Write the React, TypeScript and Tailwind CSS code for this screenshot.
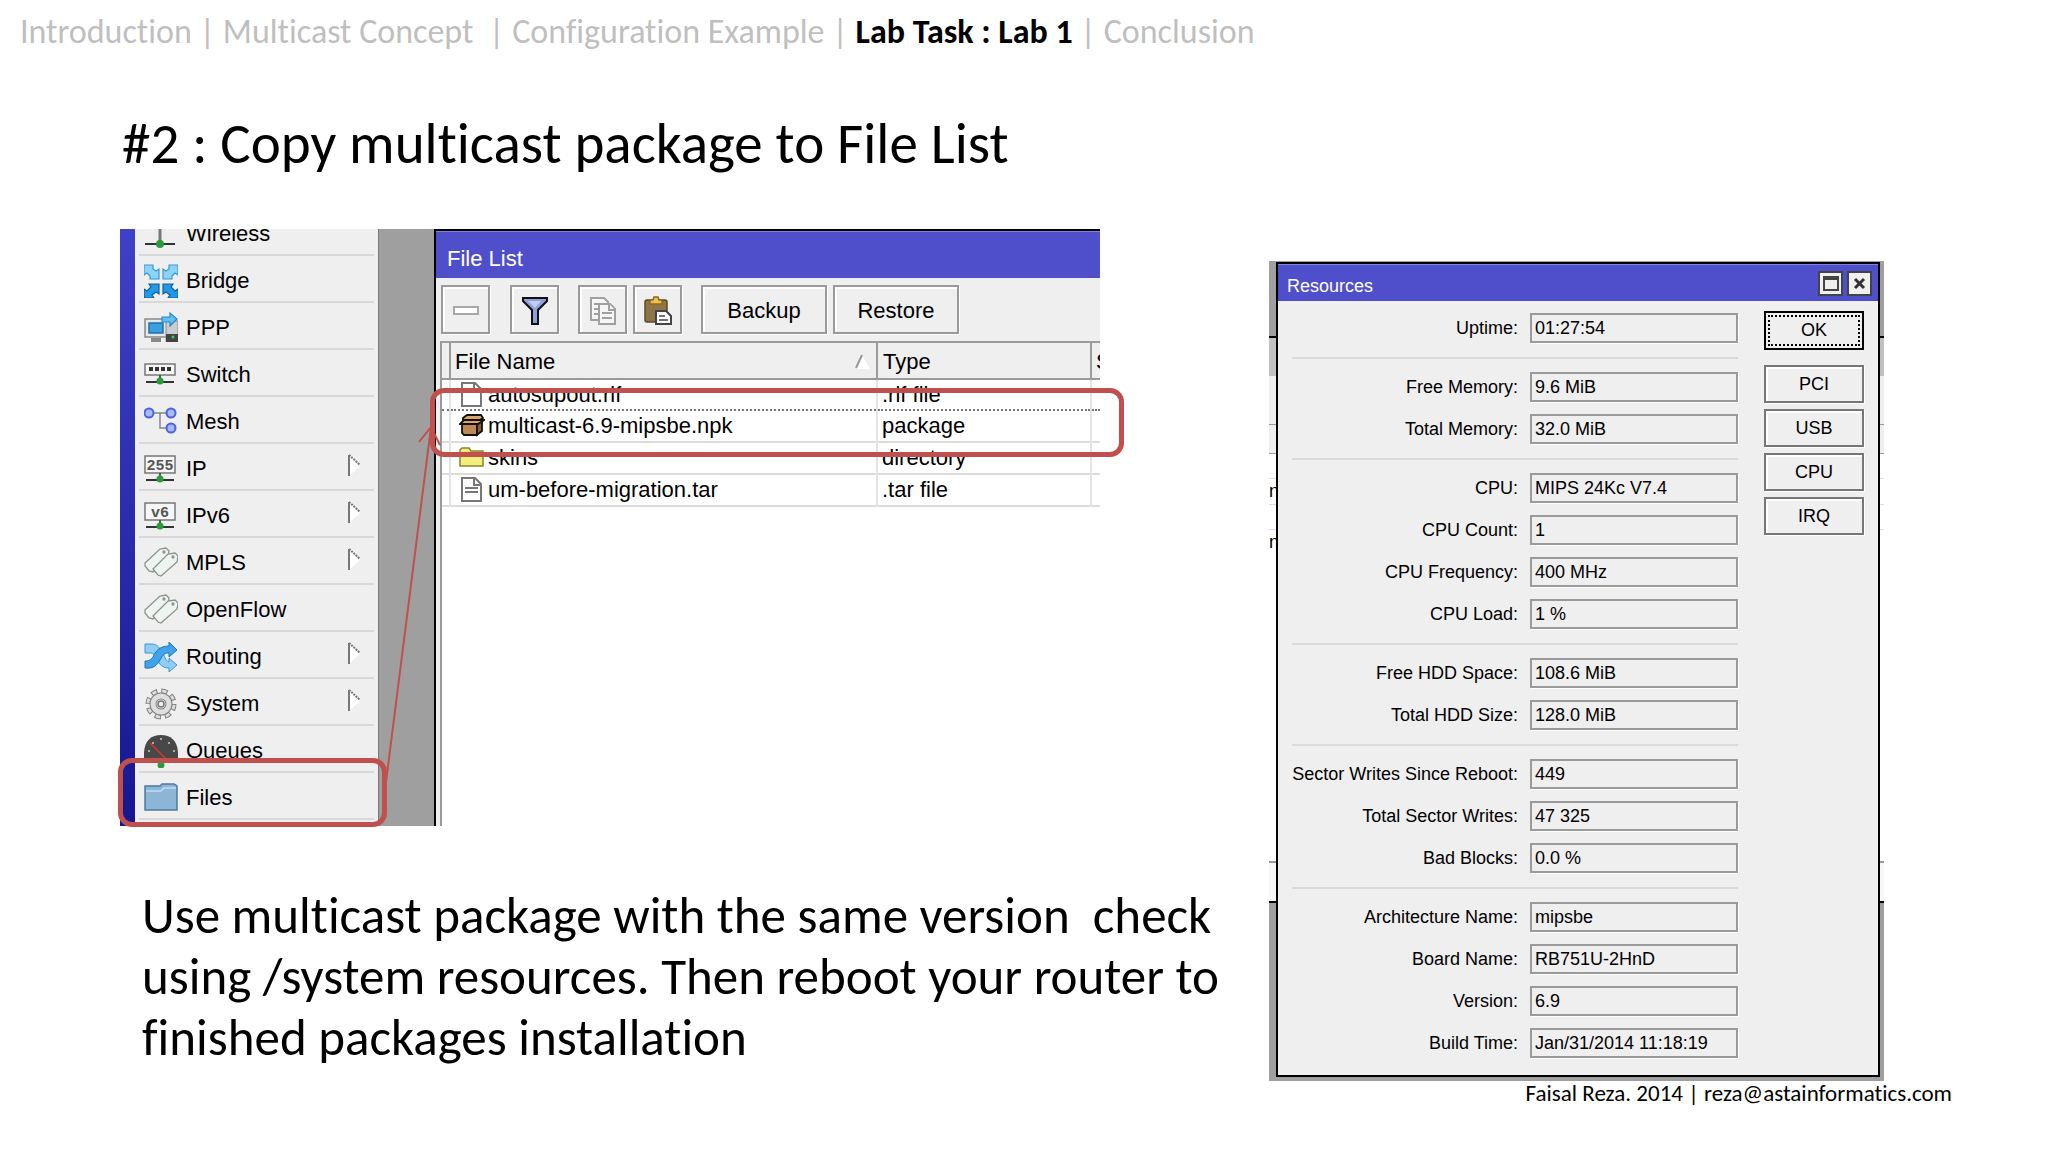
import type { ReactNode } from "react";

const icons: Record<string, ReactNode> = {
  wireless: (
    <>
      <path d="M16 6v21" stroke="#777" strokeWidth="3" />
      <path d="M1 27h30" stroke="#333" strokeWidth="2" />
      <circle cx="16" cy="27" r="4" fill="#2a9a3a" />
    </>
  ),
  bridge: (
    <>
      <g fill="#8ad4fa" stroke="#3d97d6" strokeWidth="1.2">
        <path d="M0 1h9v4l3 2 3-2v10H6V12l-3-3-3 2z" />
        <path d="M34 1h-9v4l-3 2-3-2v10h9v-3l3-3 3 2z" />
      </g>
      <g fill="#2298e6" stroke="#0f5fa0" strokeWidth="1.2">
        <path d="M15 20H5l2 3-4 4-3-2v9h10l-2-3 4-3 3 2z" />
        <path d="M19 20h10l-2 3 4 4 3-2v9H24l2-3-4-3-3 2z" />
      </g>
    </>
  ),
  ppp: (
    <>
      <rect x="1" y="8" width="22" height="18" fill="#e8e8e8" stroke="#888" strokeWidth="1.5" />
      <rect x="5" y="12" width="14" height="10" fill="#3d9fe0" stroke="#1e6fae" strokeWidth="1.5" />
      <rect x="7" y="27" width="10" height="4" fill="#888" />
      <rect x="22" y="10" width="12" height="20" fill="#ccc" stroke="#888" />
      <rect x="22" y="23" width="12" height="8" fill="#444" />
      <circle cx="29" cy="26" r="1.5" fill="#3bd14a" />
      <path d="M18 6h8V2l7 6-7 7v-4h-8z" fill="#5fc0f5" stroke="#2b86c8" strokeWidth="1.2" />
    </>
  ),
  switch: (
    <>
      <rect x="1" y="6" width="30" height="11" fill="#f4f4f4" stroke="#777" strokeWidth="1.5" />
      <path d="M5 11h22" stroke="#333" strokeWidth="4" strokeDasharray="4 2" />
      <path d="M16 17v6" stroke="#555" strokeWidth="2" />
      <path d="M2 24h28" stroke="#333" strokeWidth="2" />
      <circle cx="16" cy="23" r="3.5" fill="#2a9a3a" />
    </>
  ),
  mesh: (
    <>
      <path d="M8 8h14M16 8v15h8" fill="none" stroke="#888" strokeWidth="1.5" />
      <g fill="#a9b8f5" stroke="#4a63dc" strokeWidth="2">
        <circle cx="5" cy="8" r="4.5" />
        <circle cx="27" cy="8" r="4.5" />
        <circle cx="27" cy="23" r="4.5" />
      </g>
    </>
  ),
  routing: (
    <>
      <path
        d="M1 4h7c5 0 8 4 11 9 2 5 4 9 6 9v-4l8 7-8 7v-4c-7 0-10-4-12-9-2-4-4-6-6-6H1z"
        fill="#8fcdf7"
        stroke="#3d97d6"
      />
      <path
        d="M1 28c9 1 12-3 15-8 3-6 5-7 9-7v4l8-7-8-8v4c-7 0-12 3-15 9-2 4-4 6-9 6z"
        fill="#3fa4ea"
        stroke="#1f74b8"
      />
    </>
  ),
  system: (
    <>
      <circle cx="17" cy="17" r="13" fill="none" stroke="#808080" strokeWidth="5" strokeDasharray="6.2 4" />
      <circle cx="17" cy="17" r="13" fill="none" stroke="#dedede" strokeWidth="3" strokeDasharray="4.2 6" strokeDashoffset="-1" />
      <circle cx="17" cy="17" r="8" fill="none" stroke="#808080" strokeWidth="7" />
      <circle cx="17" cy="17" r="8" fill="none" stroke="#dedede" strokeWidth="5" />
      <circle cx="17" cy="17" r="3" fill="#eee" stroke="#777" strokeWidth="1.5" />
    </>
  ),
  queues: (
    <>
      <path d="M0 24C-1 8 6 1 17 1s18 7 17 23z" fill="#484848" />
      <path d="M4 17h2M8 9h2M16 5h2M24 9h2M29 17h2" stroke="#ccc" strokeWidth="1.5" />
      <path d="M6 9l16 16" stroke="#d33" strokeWidth="1.5" />
      <circle cx="17" cy="31" r="3.5" fill="#2a9a3a" />
    </>
  ),
  files: (
    <>
      <path d="M1 5h15l2-2h12l3 2v24H1z" fill="#8db5d5" stroke="#4c7ba2" strokeWidth="1.5" />
      <path d="M2 10h15l3-3h12" fill="none" stroke="#c5dcee" strokeWidth="1.5" />
    </>
  ),
};

function Tags() {
  return (
    <g fill="#eef5f0" stroke="#8b938d" strokeWidth="1.3">
      <path d="M1 17L16 3l6-1 3 3-1 6L9 26l-4-1-4-5z" />
      <path d="M9 23L24 8l7-1 3 3-1 6-16 14-3-1z" />
      <circle cx="20" cy="6" r="1" />
      <circle cx="29" cy="11" r="1" />
    </g>
  );
}

function Plate({ text }: { text: string }) {
  return (
    <>
      <rect x="1" y="4" width="30" height="17" fill="#f6f6f6" stroke="#777" strokeWidth="1.5" />
      <text x="16" y="18" textAnchor="middle" fontSize="15" fontWeight="700" fontFamily="Liberation Mono, monospace" fill="#555">
        {text}
      </text>
      <path d="M16 21v5" stroke="#555" strokeWidth="2" />
      <path d="M2 28h28" stroke="#333" strokeWidth="2" />
      <circle cx="16" cy="27" r="3.5" fill="#2a9a3a" />
    </>
  );
}

const menu = [
  { label: "Wireless", icon: icons.wireless },
  { label: "Bridge", icon: icons.bridge },
  { label: "PPP", icon: icons.ppp },
  { label: "Switch", icon: icons.switch },
  { label: "Mesh", icon: icons.mesh },
  { label: "IP", icon: <Plate text="255" />, sub: true },
  { label: "IPv6", icon: <Plate text="v6" />, sub: true },
  { label: "MPLS", icon: <Tags />, sub: true },
  { label: "OpenFlow", icon: <Tags /> },
  { label: "Routing", icon: icons.routing, sub: true },
  { label: "System", icon: icons.system, sub: true },
  { label: "Queues", icon: icons.queues },
  { label: "Files", icon: icons.files },
];

const page = <path d="M3 1h13l6 6v17H3zM15 1v7h7" fill="#fff" stroke="#777" strokeWidth="2" />;

const files = [
  { name: "autosupout.rif", type: ".rif file", icon: page },
  {
    name: "multicast-6.9-mipsbe.npk",
    type: "package",
    icon: (
      <g fill="#c08850" stroke="#111" strokeWidth="1.8">
        <path d="M3 11h15v11H5l-2-2z" />
        <path d="M18 11l5-4v11l-5 4z" fill="#8a5c30" />
        <path d="M4 5l4-3h14l2 3-5 3H4z" fill="#d9a56c" />
        <path d="M1 11l4-4h20l-6 4z" fill="#d9a56c" />
      </g>
    ),
  },
  {
    name: "skins",
    type: "directory",
    icon: <path d="M1 21V5l2-2h7l2 3h12v15zM1 8h22" fill="#f2ee7c" stroke="#8a8430" strokeWidth="1.5" />,
  },
  {
    name: "um-before-migration.tar",
    type: ".tar file",
    icon: (
      <>
        {page}
        <path d="M6 11h13M6 15h13" stroke="#777" strokeWidth="2" />
      </>
    ),
  },
];

const groups = [
  [["Uptime", "01:27:54"]],
  [
    ["Free Memory", "9.6 MiB"],
    ["Total Memory", "32.0 MiB"],
  ],
  [
    ["CPU", "MIPS 24Kc V7.4"],
    ["CPU Count", "1"],
    ["CPU Frequency", "400 MHz"],
    ["CPU Load", "1 %"],
  ],
  [
    ["Free HDD Space", "108.6 MiB"],
    ["Total HDD Size", "128.0 MiB"],
  ],
  [
    ["Sector Writes Since Reboot", "449"],
    ["Total Sector Writes", "47 325"],
    ["Bad Blocks", "0.0 %"],
  ],
  [
    ["Architecture Name", "mipsbe"],
    ["Board Name", "RB751U-2HnD"],
    ["Version", "6.9"],
    ["Build Time", "Jan/31/2014 11:18:19"],
  ],
];

const toolButton =
  "flex h-[49px] items-center justify-center border-2 border-[#9a9a9a] bg-[#f0eff0] pt-[2px] shadow-[inset_2px_2px_0_#fff,1px_1px_0_#fff]";

function Sidebar() {
  return (
    <div className="flex w-[259px] shrink-0 border-r border-[#777] bg-[#f0eff0]">
      <div className="w-[15px] bg-linear-to-b from-[#4040c8] to-[#161690]" />
      <ul className="-mt-5 ml-1 w-[235px]">
        {menu.map((item) => (
          <li key={item.label} className="h-[47px] border-b-2 border-[#d8d8d8]">
            <button className="flex h-full w-full items-center pt-1 pl-[5px] text-left">
              <svg width="34" height="34" viewBox="0 0 34 34" className="mr-2 shrink-0">
                {item.icon}
              </svg>
              <span className="flex-1">{item.label}</span>
              {item.sub && (
                <svg width="14" height="24" viewBox="0 0 14 24" className="mr-3 mb-2">
                  <path d="M1 2l11 11L1 23z" fill="#fff" />
                  <path d="M1 23V2" stroke="#777" strokeWidth="2" />
                  <path d="M1 2l11 10" stroke="#777" strokeWidth="2" strokeDasharray="2 1" />
                </svg>
              )}
            </button>
          </li>
        ))}
      </ul>
    </div>
  );
}

function FileList() {
  return (
    <div className="flex min-w-0 flex-1 flex-col border-t-2 border-l-2 border-black bg-[#f0eff0]">
      <div className="flex h-[47px] items-center border-t border-[#8080e0] bg-[#4f4fcb] pt-2 pl-[11px] text-white">
        File List
      </div>
      <div className="flex h-[63px] items-center pl-[5px]">
        <button aria-label="Remove" className={`${toolButton} mr-5 w-[49px]`}>
          <span className="h-[9px] w-[26px] border-2 border-[#a8a8a8] bg-white" />
        </button>
        <button aria-label="Filter" className={`${toolButton} mr-[19px] w-[49px]`}>
          <svg width="28" height="30" viewBox="0 0 28 30">
            <path d="M2 2h24v3l-9 9v14h-6V14L2 5z" fill="#8fa0dc" stroke="#111" strokeWidth="2" />
            <path d="M7 5h13l-6 7z" fill="#c3cdf2" />
          </svg>
        </button>
        <button aria-label="Copy" className={`${toolButton} mr-[6px] w-[49px]`}>
          <svg width="28" height="30" viewBox="0 0 28 30" fill="#f6f6f6" stroke="#a0a0a0" strokeWidth="2">
            <path d="M2 2h13l4 4v18H2z" />
            <path d="M5 8h6M5 13h6M5 18h6" />
            <path d="M10 8h11l5 5v15H10z" />
            <path d="M13 17h10M13 22h10M20 8v6h6" />
          </svg>
        </button>
        <button aria-label="Paste" className={`${toolButton} mr-[19px] w-[49px]`}>
          <svg width="28" height="30" viewBox="0 0 28 30">
            <rect x="1" y="4" width="22" height="22" rx="2" fill="#8f7446" stroke="#5c4a2a" strokeWidth="1.5" />
            <path d="M6 8V4h3l1-3h4l1 3h3v4z" fill="#f0c050" stroke="#8a6a20" strokeWidth="1.5" />
            <path d="M12 15h10l5 5v8H12z" fill="#fff" stroke="#444" strokeWidth="2" />
            <path d="M15 20h6M15 24h9" stroke="#444" strokeWidth="1.5" />
          </svg>
        </button>
        <button className={`${toolButton} mr-[6px] w-[126px]`}>Backup</button>
        <button className={`${toolButton} w-[126px]`}>Restore</button>
      </div>
      <div className="ml-1 flex-1 border-l-2 border-[#9a9a9a] bg-white">
        <table className="w-full table-fixed border-collapse text-left">
          <thead>
            <tr className="h-[37px] border-y-2 border-[#9a9a9a] bg-[#f0eff0]">
              <th className="w-2 border-r-2 border-[#9a9a9a]" />
              <th className="border-r-2 border-[#9a9a9a] pt-[2px] pl-1 font-normal">
                <div className="flex items-center justify-between">
                  File Name
                  <svg width="18" height="16" viewBox="0 0 18 16" className="mr-1">
                    <path d="M8 1l8 14H2z" fill="#fff" />
                    <path d="M8 1L2 14" stroke="#999" strokeWidth="2" />
                  </svg>
                </div>
              </th>
              <th className="w-[214px] border-r-2 border-[#9a9a9a] pt-[2px] pl-[5px] font-normal">Type</th>
              <th className="w-[9px] overflow-hidden pt-[2px] pl-1 font-normal">S</th>
            </tr>
          </thead>
          <tbody>
            {files.map((file, i) => (
              <tr
                key={file.name}
                className={
                  i === 0
                    ? "h-[31px] border-b-2 border-dotted border-b-[#777]"
                    : "h-8 border-b-2 border-[#dcdcdc]"
                }
              >
                <td className="border-r-2 border-r-[#e4e4e4]" />
                <td className="border-r-2 border-r-[#e4e4e4] pl-2">
                  <div className="flex h-7 items-center gap-[3px]">
                    <svg width="26" height="26" viewBox="0 0 26 26">
                      {file.icon}
                    </svg>
                    {file.name}
                  </div>
                </td>
                <td className="border-r-2 border-r-[#e4e4e4] pl-1 leading-7">{file.type}</td>
                <td />
              </tr>
            ))}
          </tbody>
        </table>
      </div>
    </div>
  );
}

function WinboxFigure() {
  return (
    <div className="relative mr-[169px] font-['Liberation_Sans',Arial,sans-serif] text-[22px] leading-7">
      <div className="flex h-[597px] overflow-hidden bg-[#a09fa0]">
        <Sidebar />
        <div className="w-[55px] shrink-0" />
        <FileList />
      </div>

      {/* Highlights */}
      <svg width="340" height="597" viewBox="0 0 340 597" className="pointer-events-none absolute top-0 left-0">
        <path d="M266 553L311 198M299 213l12-15 9 18" fill="none" stroke="#c0504d" strokeWidth="2" />
      </svg>
      <div className="pointer-events-none absolute top-[159px] -right-6 left-[310px] h-[69px] rounded-[14px] border-5 border-[#c0504d]" />
      <div className="pointer-events-none absolute top-[529px] -left-[2px] h-[69px] w-[269px] rounded-[14px] border-5 border-[#c0504d]" />
    </div>
  );
}

/* The desktop showing behind the dialog's edges */
function Backdrop() {
  return (
    <div className="absolute inset-0 flex flex-col overflow-hidden leading-6">
      <div className="h-[77px] border-b-2 border-black bg-[#a09fa0]" />
      <div className="h-[38px] bg-[#c0c0c0]" />
      <div className="h-[49px] border-b border-[#999] bg-[#f0eff0]" />
      <div className="h-[29px] border-b border-[#999] bg-[#f0eff0]" />
      <div className="h-[25px] border-b border-[#dcdcdc] bg-white" />
      <div className="h-[26px] border-b border-[#dcdcdc] bg-white">n</div>
      <div className="h-[25px] border-b border-[#dcdcdc] bg-white" />
      <div className="h-[26px] bg-white">n</div>
      <div className="h-[307px] border-b-2 border-[#999] bg-white" />
      <div className="h-[40px] border-b-2 border-black bg-[#f8f8f8]" />
      <div className="flex-1 bg-[#a09fa0]" />
    </div>
  );
}

function Resources() {
  const sideButton =
    "h-[38px] w-full border-2 border-[#777] bg-[#f0eff0] shadow-[inset_2px_2px_0_#fff,1px_1px_0_#fff]";

  return (
    <div className="relative mt-8 pt-[1px] pr-1 pb-1 pl-[7px] font-['Liberation_Sans',Arial,sans-serif] text-[18px]">
      <Backdrop />
      <div className="relative border-2 border-black bg-[#f0eff0]">
        <div className="flex h-[37px] items-center border-t border-[#8080e0] bg-[#4f4fcb] pr-[6px] pl-[9px] text-white">
          <h2 className="flex-1 pt-[6px]">Resources</h2>
          <button aria-label="Maximize" className="mr-1 flex size-[25px] items-center justify-center border-2 border-[#444] bg-[#f0eff0]">
            <span className="h-[15px] w-4 border-2 border-t-4 border-[#444]" />
          </button>
          <button aria-label="Close" className="flex size-[25px] items-center justify-center border-2 border-[#444] bg-[#f0eff0]">
            <svg width="13" height="13" viewBox="0 0 13 13">
              <path d="M2 2l9 9M11 2l-9 9" stroke="#333" strokeWidth="3" />
            </svg>
          </button>
        </div>
        <div className="flex gap-[26px] pr-[14px] pl-[14px]">
          <div className="flex-1 pt-3 pb-[17px]">
            {groups.map((rows, i) => (
              <div
                key={i}
                className={i > 0 ? "mt-[14px] flex flex-col gap-3 border-t-2 border-[#dadada] pt-[13px]" : ""}
              >
                {rows.map(([label, value]) => (
                  <label key={label} className="flex items-center gap-3">
                    <span className="flex-1 text-right whitespace-nowrap">{label}:</span>
                    <input
                      readOnly
                      value={value}
                      className="h-[30px] w-[208px] border-2 border-[#9a9a9a] bg-[#f0eff0] pl-[3px] shadow-[1px_1px_0_#fff] outline-none"
                    />
                  </label>
                ))}
              </div>
            ))}
          </div>
          <div className="flex w-[100px] flex-col gap-[6px] pt-[10px]">
            <button className="mb-[9px] h-[39px] w-full border-2 border-black p-[2px]">
              <span className="flex h-full items-center justify-center border-2 border-dotted border-black">OK</span>
            </button>
            <button className={sideButton}>PCI</button>
            <button className={sideButton}>USB</button>
            <button className={sideButton}>CPU</button>
            <button className={sideButton}>IRQ</button>
          </div>
        </div>
      </div>
    </div>
  );
}

export default function App() {
  return (
    <div className="min-h-screen bg-white font-['Carlito','Lato',sans-serif] text-black [font-variant-ligatures:none]">
      <nav className="pt-3 pl-5 text-[34px] leading-10 whitespace-pre text-[#bfbfbf]">
        Introduction | Multicast Concept{"  "}| Configuration Example |{" "}
        <strong className="font-bold text-black">Lab Task : Lab 1</strong> | Conclusion
      </nav>
      <h1 className="mt-[60px] pl-[122px] text-[57px] leading-[64px]">#2 : Copy multicast package to File List</h1>

      <main className="mt-[53px] grid grid-cols-[1149fr_615fr] items-start pr-[164px] pl-[120px]">
        <div>
          <WinboxFigure />
          <p className="mt-[59px] pl-[22px] text-[51px] leading-[61px] whitespace-nowrap">
            Use multicast package with the same version&nbsp; check
            <br />
            using /system resources. Then reboot your router to
            <br />
            finished packages installation
          </p>
        </div>
        <Resources />
      </main>

      <footer className="flex justify-end pr-24 text-[23px] leading-6">
        Faisal Reza. 2014 | reza@astainformatics.com
      </footer>
    </div>
  );
}
